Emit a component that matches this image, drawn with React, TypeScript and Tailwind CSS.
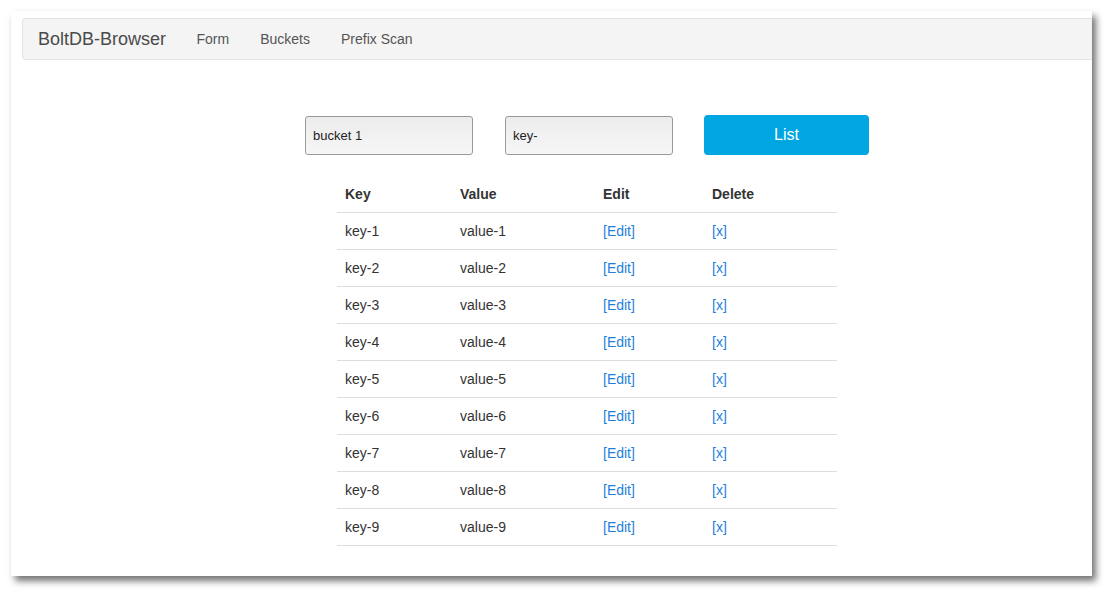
const rows = [1, 2, 3, 4, 5, 6, 7, 8, 9];

export default function App() {
  return (
    <div className="h-[595px] bg-white pl-[11px] pt-[11px] font-['Liberation_Sans',Arial,sans-serif] text-[14px] text-[#333]">
      <div className="flex h-[565px] w-[1081px] flex-col bg-white shadow-[4px_5px_7px_rgba(0,0,0,0.55)]">
        <nav className="ml-[11px] mt-[7px] flex h-[42px] items-center rounded-l-[4px] border border-r-0 border-[#e3e3e3] bg-[#f4f4f4]">
          <span className="pl-[15px] pr-[15px] text-[18px] text-[#4a4a4a]">BoltDB-Browser</span>
          <a className="px-[15.5px] text-[#555]">Form</a>
          <a className="px-[15.5px] text-[#555]">Buckets</a>
          <a className="px-[15.5px] text-[#555]">Prefix Scan</a>
        </nav>

        <div className="ml-[294px] mt-[55px] flex items-center">
          <input
            defaultValue="bucket 1"
            className="h-[39px] w-[168px] rounded-[3px] border border-[#9a9a9a] bg-gradient-to-b from-[#ececec] to-[#f6f6f6] px-[7px] text-[13px] text-[#222] outline-none"
          />
          <input
            defaultValue="key-"
            className="ml-[32px] h-[39px] w-[168px] rounded-[3px] border border-[#9a9a9a] bg-gradient-to-b from-[#ececec] to-[#f6f6f6] px-[7px] text-[13px] text-[#222] outline-none"
          />
          <button className="ml-[31px] h-[40px] w-[165px] rounded-[4px] bg-[#00a6e2] text-[16px] text-white">
            List
          </button>
        </div>

        <table className="ml-[326px] mt-[20px] w-[500px] border-collapse text-left">
          <thead>
            <tr className="h-[37px] border-b border-[#dddddd]">
              <th className="w-[115px] px-[8px] pt-[2px] font-bold">Key</th>
              <th className="w-[143px] px-[8px] pt-[2px] font-bold">Value</th>
              <th className="w-[109px] px-[8px] pt-[2px] font-bold">Edit</th>
              <th className="px-[8px] pt-[2px] font-bold">Delete</th>
            </tr>
          </thead>
          <tbody>
            {rows.map((n) => (
              <tr key={n} className="h-[37px] border-b border-[#dddddd]">
                <td className="px-[8px] pt-[2px]">key-{n}</td>
                <td className="px-[8px] pt-[2px]">value-{n}</td>
                <td className="px-[8px] pt-[2px]">
                  <a className="text-[#1f7fdb]">[Edit]</a>
                </td>
                <td className="px-[8px] pt-[2px]">
                  <a className="text-[#1f7fdb]">[x]</a>
                </td>
              </tr>
            ))}
          </tbody>
        </table>
      </div>
    </div>
  );
}
